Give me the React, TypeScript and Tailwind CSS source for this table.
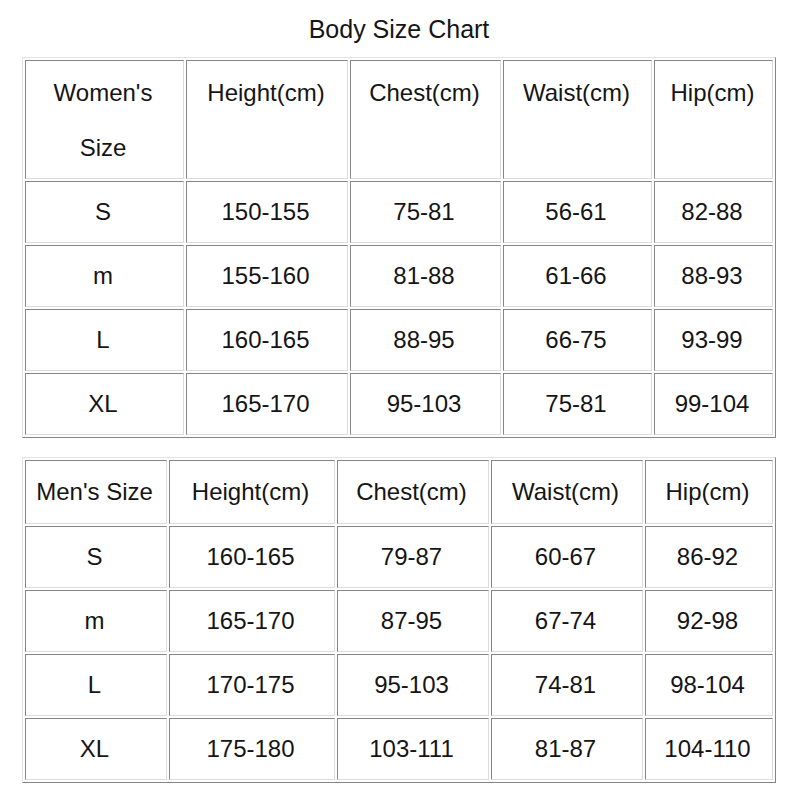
import React from "react";

const cell =
  "border border-t-[#858585] border-l-[#858585] border-b-[#dcdcdc] border-r-[#dcdcdc] flex items-center justify-center text-center";

const outer =
  "border border-t-[#e2e2e2] border-l-[#e2e2e2] border-b-[#858585] border-r-[#858585] p-[2px] grid gap-[2px] w-max";

const women = [
  ["S", "150-155", "75-81", "56-61", "82-88"],
  ["m", "155-160", "81-88", "61-66", "88-93"],
  ["L", "160-165", "88-95", "66-75", "93-99"],
  ["XL", "165-170", "95-103", "75-81", "99-104"],
];

const men = [
  ["S", "160-165", "79-87", "60-67", "86-92"],
  ["m", "165-170", "87-95", "67-74", "92-98"],
  ["L", "170-175", "95-103", "74-81", "98-104"],
  ["XL", "175-180", "103-111", "81-87", "104-110"],
];

export default function App() {
  return (
    <div
      className="w-[800px] h-[800px] bg-white text-[#151515] text-[24px]"
      style={{ fontFamily: '"Liberation Sans", Arial, sans-serif' }}
    >
      <div className="pt-[17px] h-[57px] text-center leading-[24px] text-[25px] pr-[2px]">Body Size Chart</div>

      <div className="ml-[22px]">
        <div
          className={
            outer +
            " grid-cols-[159px_162px_151px_149px_119px] grid-rows-[119px_62px_62px_62px_62px]"
          }
        >
          <div className={cell.replace("items-center", "items-start") + " pt-[4px] leading-[55px] pr-[3px]"}>
            Women's
            <br />
            Size
          </div>
          {["Height(cm)", "Chest(cm)", "Waist(cm)", "Hip(cm)"].map((h) => (
            <div key={h} className={cell.replace("items-center", "items-start") + " pt-[4px] leading-[55px] pr-[2px]"}>
              {h}
            </div>
          ))}
          {women.map((row, i) =>
            row.map((v, j) => (
              <div key={i + "-" + j} className={cell + " pr-[3px]"}>
                {v}
              </div>
            ))
          )}
        </div>

        <div className="h-[19px]" />

        <div
          className={
            outer +
            " grid-cols-[142px_166px_152px_152px_128px] grid-rows-[64px_62px_62px_62px_62px]"
          }
        >
          {["Men's Size", "Height(cm)", "Chest(cm)", "Waist(cm)", "Hip(cm)"].map((h) => (
            <div key={h} className={cell + " pr-[3px]"}>
              {h}
            </div>
          ))}
          {men.map((row, i) =>
            row.map((v, j) => (
              <div key={i + "-" + j} className={cell + " pr-[3px]"}>
                {v}
              </div>
            ))
          )}
        </div>
      </div>
    </div>
  );
}
